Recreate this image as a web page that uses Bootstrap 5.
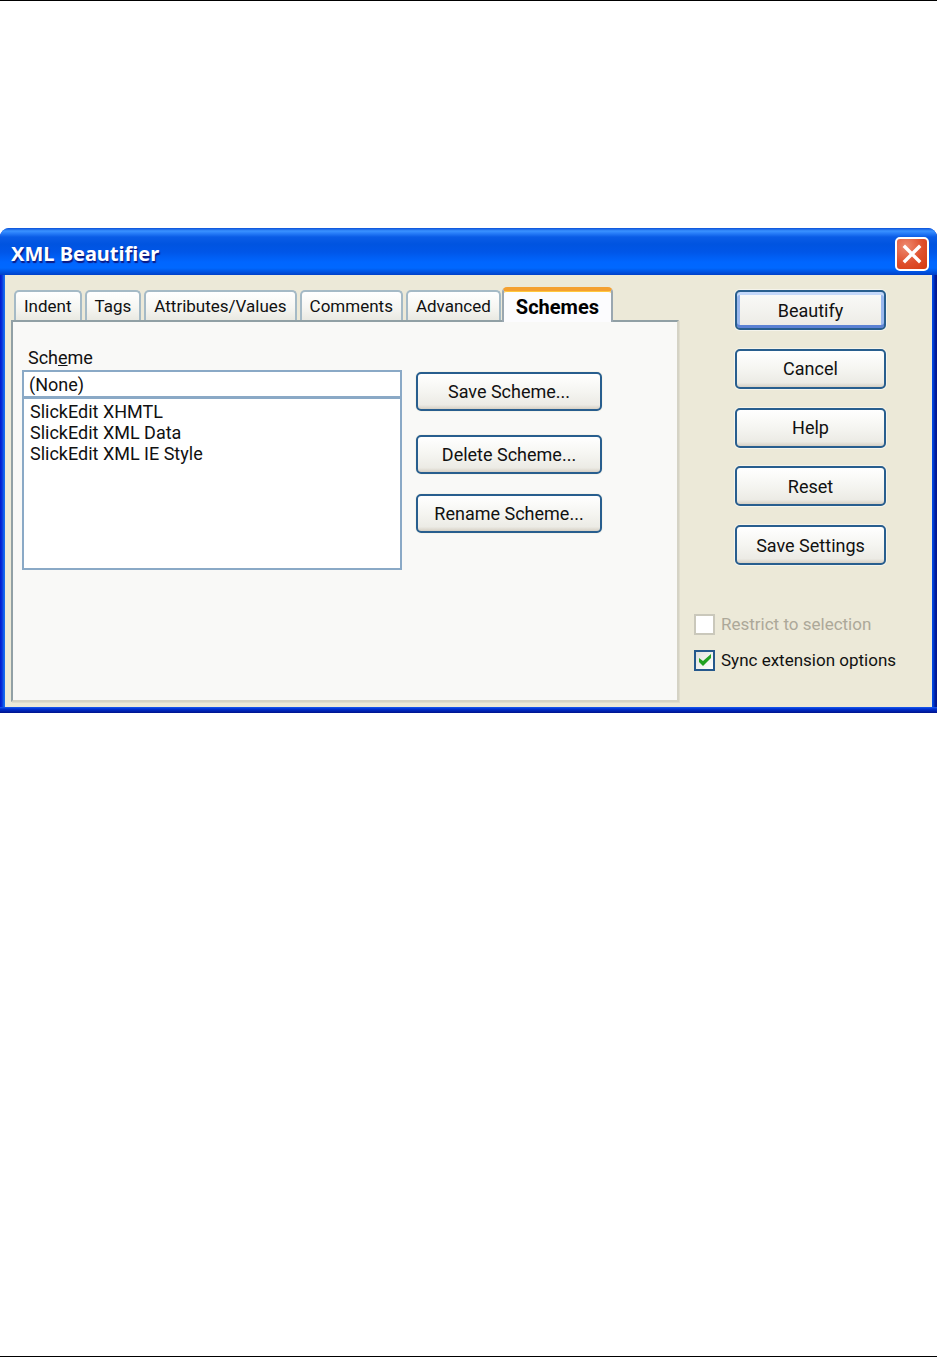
<!DOCTYPE html>
<html lang="en">
<head>
<meta charset="utf-8">
<meta name="viewport" content="width=device-width, initial-scale=1">
<title>XML Beautifier</title>
<link href="https://cdn.jsdelivr.net/npm/bootstrap@5.3.0/dist/css/bootstrap.min.css" rel="stylesheet">
<style>
  body { font-family: Roboto, "Liberation Sans", sans-serif; font-size: 18px; line-height: 21px; color: #111; background: #fff; }
  .sheet { border-top: 1px solid #000; border-bottom: 1px solid #000; padding-top: 227px; }

  /* Window frame */
  .window-frame { background: linear-gradient(90deg, #0019cf 0, #0831d9 2px, #166aee 4px, #0855dd 50%, #0046e0 calc(100% - 4px), #001ea0 calc(100% - 2px), #00138c 100%); border-radius: 9px 9px 0 0; padding: 0 5px 6px; position: relative; overflow: hidden; }
  .window-frame::after { content: ""; position: absolute; left: 0; right: 0; bottom: 0; height: 6px; background: linear-gradient(#1a5cf0, #0030d0 34%, #00138c); }
  .title-bar { height: 47px; margin: 0 -5px; padding: 4px 8px 0 11px; background: linear-gradient(#0a50d8 0, #3a92ff 3px, #2a80fa 5px, #0a5ce6 9px, #0054e0 16px, #0056e8 24px, #0066ff 34px, #0068ff 40px, #0052e0 44px, #0040c8 47px); }
  .title-text { font-family: "Noto Sans", sans-serif; font-size: 20px; line-height: 24px; font-weight: 700; color: #fff; text-shadow: 1px 2px 1px #0a1883; }
  .close-btn { width: 34px; height: 34px; border: 2px solid #fff; border-radius: 5px; background: radial-gradient(circle at 30% 25%, #ee8a70, #df4f2c 55%, #d43a10); }
  .window-body { background: #ece9d8; padding: 12px 0 5px 6px; }

  /* Tabs */
  .tab-strip { padding-left: 3px; gap: 3px; border: 0; align-items: end; }
  .tab-strip .nav-link { height: 30px; margin: 0; padding: 0 8px; font-size: 17px; color: #111; line-height: 29px; border: 2px solid #a5bac6; border-bottom: 0; border-radius: 5px 5px 0 0; background: linear-gradient(#fff, #f6f6f2 55%, #e9e9e2); }
  .tab-strip .nav-link.active { height: 35px; margin: 0 0 -2px -2px; padding: 0 12px; font-size: 20px; line-height: 26px; font-weight: 700; color: #000; background: #fcfcfe; border: 2px solid #9aa7b0; border-top: 4px solid #f4a030; border-bottom: 0; position: relative; z-index: 1; box-shadow: inset 0 1px #ffc73c; }
  .tab-panel { min-height: 382px; padding: 24px 9px; background: #f9f9f7; border: 2px solid #91a0a5; border-right-color: #d5d3c5; border-bottom-color: #d5d3c5; box-shadow: 1px 1px #e0ddcd; }

  /* Scheme picker */
  .scheme-col { width: 380px; }
  .scheme-label { padding-left: 6px; line-height: 24px; }
  .scheme-input, .scheme-list { display: block; width: 100%; color: #111; background: #fff; border: 2px solid #8aa9c6; border-radius: 0; outline: 0; }
  .scheme-input { height: 28px; padding: 0 5px; }
  .scheme-list { height: 172px; padding: 2px 0; border-top-width: 1px; overflow: hidden; }
  .scheme-list option { padding: 0 6px; min-height: 21px; line-height: 21px; }

  /* Push buttons */
  .push { --bs-btn-padding-x: 4px; --bs-btn-padding-y: 0; --bs-btn-font-size: 18px; --bs-btn-line-height: 21px; --bs-btn-color: #111; height: 39px; border: 2px solid #285e8e; border-radius: 5px; background: linear-gradient(#fff, #f5f5f1 50%, #ecebe5 88%, #d6d0c5); box-shadow: 0 0 0 1px #f5f4ec; }
  .push-default { background: linear-gradient(#fafaf8, #ecebe5); box-shadow: 0 0 0 1px #f5f4ec, inset 0 3px #c4d8fa, inset 0 -3px #5c82d4, inset 3px 0 #9ab8ee, inset -3px 0 #9ab8ee; }
  .scheme-actions { width: 186px; margin-left: 14px; padding-top: 26px; }
  .side-col { width: 253px; padding: 3px 0 0 15px; }
  .command-stack { width: 151px; height: 275px; margin-left: 41px; }
  .command-stack .push { height: 40px; }

  /* Check boxes */
  .tick-list { padding-top: 49px; gap: 15px; }
  .tick-row { gap: 6px; font-size: 17px; }
  .tick { appearance: none; width: 21px; height: 21px; margin: 0; border: 2px solid #25588c; background: linear-gradient(135deg, #e2e2dc, #fff); }
  .tick:disabled { border-color: #cac8bb; background: #fff; }
  .tick:checked { background-image: url("data:image/svg+xml,%3Csvg xmlns='http://www.w3.org/2000/svg' viewBox='0 0 17 17'%3E%3Cpath d='M3 6v4l4 4 8-8V2L7 9z' fill='%2321a121'/%3E%3C/svg%3E"), linear-gradient(135deg, #e2e2dc, #fff); background-size: 17px 17px; }
  .tick:disabled + label { color: #aca899; }
</style>
</head>
<body>
<main class="sheet min-vh-100">
  <section class="window-frame" aria-labelledby="window-title">
    <header class="title-bar d-flex align-items-center justify-content-between">
      <h1 class="title-text m-0" id="window-title">XML Beautifier</h1>
      <button type="button" class="close-btn p-0 d-flex align-items-center justify-content-center" aria-label="Close">
        <svg width="22" height="22" viewBox="0 0 22 22" fill="none" stroke="#fff" stroke-width="3.4" stroke-linecap="square" aria-hidden="true"><path d="M4 4l14 14M18 4L4 18"/></svg>
      </button>
    </header>
    <div class="window-body d-flex">
      <div class="flex-grow-1">
        <div class="nav nav-tabs tab-strip flex-nowrap" role="tablist">
          <button type="button" class="nav-link" role="tab">Indent</button>
          <button type="button" class="nav-link" role="tab">Tags</button>
          <button type="button" class="nav-link" role="tab">Attributes/Values</button>
          <button type="button" class="nav-link" role="tab">Comments</button>
          <button type="button" class="nav-link" role="tab">Advanced</button>
          <button type="button" class="nav-link active" role="tab" aria-selected="true" aria-controls="schemes-panel" id="schemes-tab">Schemes</button>
        </div>
        <div class="tab-panel d-flex align-items-start" role="tabpanel" id="schemes-panel" aria-labelledby="schemes-tab">
          <div class="scheme-col flex-shrink-0">
            <label class="scheme-label d-block" for="scheme-name">Sch<u>e</u>me</label>
            <input type="text" class="scheme-input" id="scheme-name" value="(None)">
            <select class="scheme-list" size="8" aria-label="Saved schemes">
              <option>SlickEdit XHMTL</option>
              <option>SlickEdit XML Data</option>
              <option>SlickEdit XML IE Style</option>
            </select>
          </div>
          <div class="scheme-actions d-grid">
            <button type="button" class="btn push mb-4">Save Scheme...</button>
            <button type="button" class="btn push mb-3">Delete Scheme...</button>
            <button type="button" class="btn push mt-1">Rename Scheme...</button>
          </div>
        </div>
      </div>
      <div class="side-col flex-shrink-0">
        <div class="command-stack d-flex flex-column justify-content-between">
          <button type="submit" class="btn push push-default">Beautify</button>
          <button type="button" class="btn push">Cancel</button>
          <button type="button" class="btn push">Help</button>
          <button type="button" class="btn push">Reset</button>
          <button type="button" class="btn push">Save Settings</button>
        </div>
        <div class="tick-list d-flex flex-column">
          <div class="tick-row d-flex align-items-center">
            <input type="checkbox" class="tick" id="restrict" disabled>
            <label for="restrict">Restrict to selection</label>
          </div>
          <div class="tick-row d-flex align-items-center">
            <input type="checkbox" class="tick" id="sync" checked>
            <label for="sync">Sync extension options</label>
          </div>
        </div>
      </div>
    </div>
  </section>
</main>
<script src="https://cdn.jsdelivr.net/npm/bootstrap@5.3.0/dist/js/bootstrap.bundle.min.js"></script>
</body>
</html>
